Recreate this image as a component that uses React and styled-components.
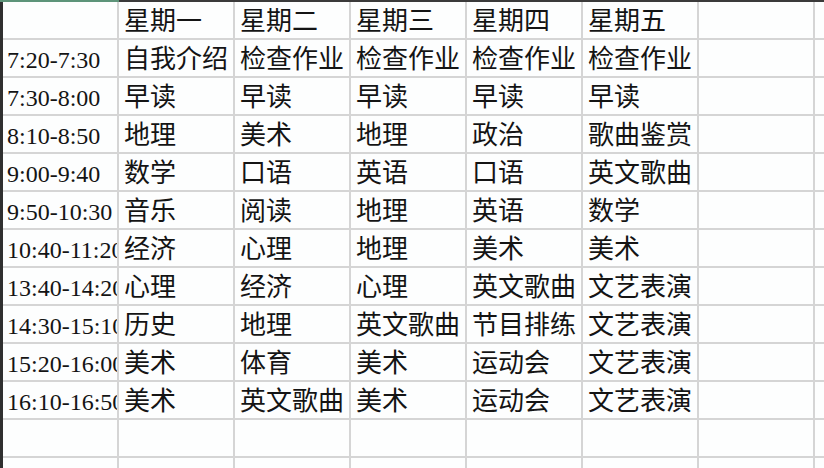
import React from "react";
import styled, { createGlobalStyle } from "styled-components";

const Global = createGlobalStyle`
  html, body { margin: 0; padding: 0; background: #fdfefe; overflow: hidden; }
  #root { width: 824px; height: 468px; overflow: hidden; }
`;

const Frame = styled.div`
  width: 824px;
  height: 468px;
  display: flex;
  flex-direction: column;
  overflow: hidden;
  background: #fdfefe;
`;

const TopBar = styled.div`
  height: 2px;
  flex: none;
  display: flex;
  background: #3a3a3a;
`;

const TopAccent = styled.div`
  width: 119px;
  background: #5d9479;
`;

const Body = styled.div`
  flex: 1;
  display: flex;
  min-height: 0;
`;

const LeftBar = styled.div`
  width: 3px;
  flex: none;
  background: #2f2f2f;
`;

const Grid = styled.div`
  flex: 1;
  display: grid;
  grid-template-columns: 114px repeat(6, 114px) 1fr;
  grid-auto-rows: 36px;
  gap: 2px;
  background: #d5d5d5;
  align-content: start;
  overflow: hidden;
`;

const Cell = styled.div`
  background: #fdfefe;
  display: flex;
  align-items: center;
  padding: ${(p) => (p.$time ? "3px 0 0 4px" : "4px 0 0 5px")};
  box-sizing: border-box;
  overflow: hidden;
  white-space: nowrap;
  color: #141414;
  font-family: "Liberation Serif", "Noto Sans CJK SC", serif;
  font-size: ${(p) => (p.$time ? "24px" : "26px")};
  font-weight: 400;
  line-height: 1;
`;

const days = ["星期一", "星期二", "星期三", "星期四", "星期五"];

const rows = [
  ["7:20-7:30", "自我介绍", "检查作业", "检查作业", "检查作业", "检查作业"],
  ["7:30-8:00", "早读", "早读", "早读", "早读", "早读"],
  ["8:10-8:50", "地理", "美术", "地理", "政治", "歌曲鉴赏"],
  ["9:00-9:40", "数学", "口语", "英语", "口语", "英文歌曲"],
  ["9:50-10:30", "音乐", "阅读", "地理", "英语", "数学"],
  ["10:40-11:20", "经济", "心理", "地理", "美术", "美术"],
  ["13:40-14:20", "心理", "经济", "心理", "英文歌曲", "文艺表演"],
  ["14:30-15:10", "历史", "地理", "英文歌曲", "节目排练", "文艺表演"],
  ["15:20-16:00", "美术", "体育", "美术", "运动会", "文艺表演"],
  ["16:10-16:50", "美术", "英文歌曲", "美术", "运动会", "文艺表演"],
];

export default function App() {
  const all = [["", ...days], ...rows, ["", "", "", "", "", ""], ["", "", "", "", "", ""]];
  return (
    <Frame>
      <Global />
      <TopBar>
        <TopAccent />
      </TopBar>
      <Body>
        <LeftBar />
        <Grid>
          {all.map((r, i) => (
            <React.Fragment key={i}>
              {r.map((c, j) => (
                <Cell key={j} $time={j === 0}>
                  {c}
                </Cell>
              ))}
              <Cell />
              <Cell />
            </React.Fragment>
          ))}
        </Grid>
      </Body>
    </Frame>
  );
}
